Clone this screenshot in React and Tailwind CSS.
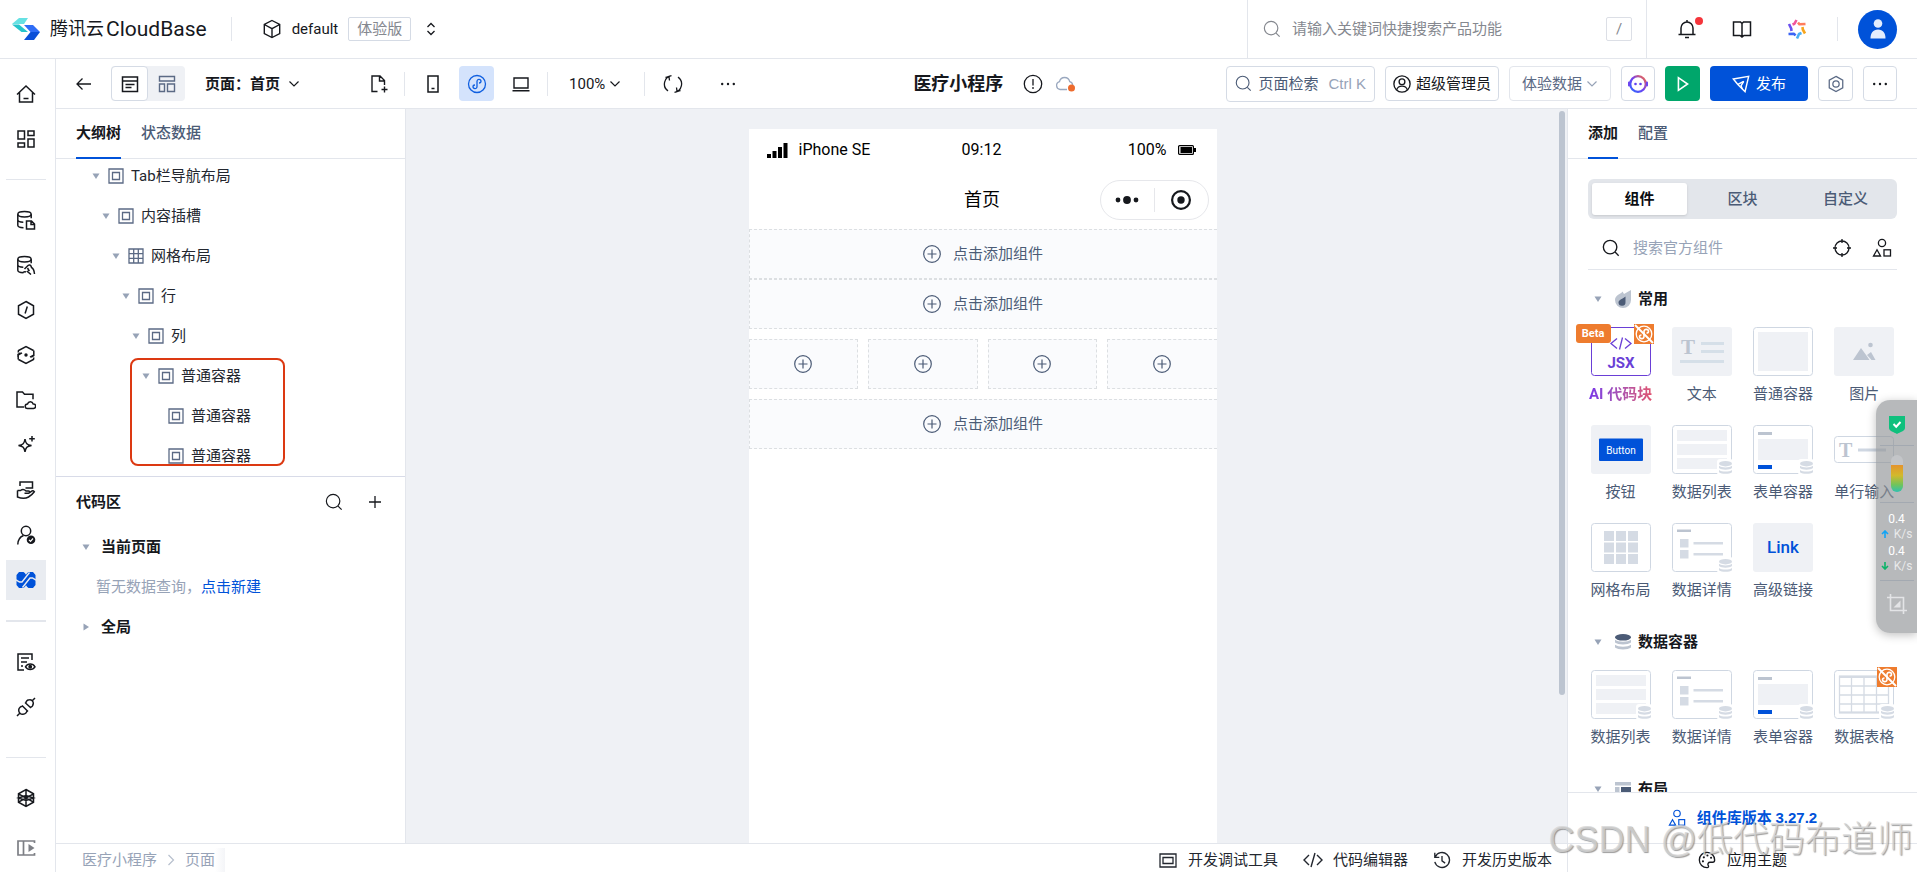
import React from "react";

const INK = "#16181d";

function Icon({ size = 20, box = 20, color = "currentColor", sw = 1.5, children, className = "" }) {
  return (
    <svg
      width={size}
      height={size}
      viewBox={`0 0 ${box} ${box}`}
      fill="none"
      stroke={color}
      strokeWidth={sw}
      className={`shrink-0 ${className}`}
      aria-hidden="true"
    >
      {children}
    </svg>
  );
}

const SearchIcon = ({ size = 18, sw = 1.3, className }) => (
  <Icon size={size} sw={sw} className={className}>
    <circle cx="9" cy="9" r="7.5" />
    <path d="M14.5 14.5 18.5 18.5" />
  </Icon>
);

const Chevron = ({ className }) => (
  <Icon size={12} box={12} sw={1.2} className={className}>
    <path d="m1.5 3.5 4.5 4.5 4.5-4.5" />
  </Icon>
);

const Dots = () => (
  <Icon size={16} box={16}>
    <g fill="currentColor" stroke="none">
      <circle cx="2.2" cy="8" r="1.2" />
      <circle cx="8" cy="8" r="1.2" />
      <circle cx="13.8" cy="8" r="1.2" />
    </g>
  </Icon>
);

const Arrow = ({ open = true }) => (
  <svg width="12" height="12" viewBox="0 0 12 12" className="shrink-0" aria-hidden="true">
    <path d={open ? "M2.5 3.5h7L6 9Z" : "M3.5 2.5v7L9 6Z"} fill="#97a3b7" />
  </svg>
);

const Shapes = ({ size = 20 }) => (
  <Icon size={size} sw={1.3}>
    <circle cx="10" cy="5" r="3.6" />
    <path d="M1.5 18 5 11.8 8.5 18Z" />
    <rect x="12" y="11.8" width="6.5" height="6.2" />
  </Icon>
);

/* ---------- side rail ---------- */

const database = (
  <>
    <ellipse cx="8.5" cy="4.2" rx="6.7" ry="2.7" />
    <path d="M1.8 4.2v11c0 1.5 2.6 2.4 5.7 2.5M1.8 9.8c0 1.3 2.4 2.4 5.5 2.5M15.2 4.2v4" />
  </>
);

const railIcons = {
  home: (
    <>
      <path d="M1 10.5 10 2l9 8.5M3.5 8.5V18h13V8.5M7.5 14.5h5" />
    </>
  ),
  grid: (
    <>
      <path d="M2 2h6.5v8H2zM12 2h6v4.5h-6zM2 14h6.5v4H2zM12 10h6v8h-6z" />
    </>
  ),
  dbFile: (
    <>
      {database}
      <path d="M10.5 11h5l3 3v5h-8zM15 11v3.5h3.5" />
    </>
  ),
  dbLink: (
    <>
      {database}
      <path d="m8.500 14 3.500-3.500c1.200-.9 2.500-.6 3 .6l.5 1.400c2 1 2.700 3 3 6.500M11.500 13l1.500 2.500-1.500 1 3.500 3M7 17.500c1-.8 2-1 3-.5" />
    </>
  ),
  hexSlash: (
    <>
      <path d="m10 1.500 7.500 4.300v8.400L10 18.500l-7.500-4.300V5.800ZM11.300 6.500l-2.200 7" />
    </>
  ),
  hexDot: (
    <>
      <path d="M2.200 7.500 2.500 5.500 10 1.500l7.500 4M2 12V9.500L4.500 7.800M17.800 8v2.500l-2.500 1.700M17.800 12.500l-.3 2L10 18.500l-7.500-4M2 10l4-2.200M18 10l-4 2.200M17.800 5.500V10M2.200 10v4.500" />
      <circle cx="10" cy="10" r="1.700" fill="currentColor" stroke="none" />
    </>
  ),
  folderCloud: (
    <>
      <path d="M8 17H1V2h5.500l2 2.200H17v5" />
      <path d="M11.500 18.500a2.300 2.300 0 0 1 0-4.600 3 3 0 0 1 5.700 0 2.300 2.300 0 0 1 .3 4.600Z" />
    </>
  ),
  sparkle: (
    <>
      <path d="M9 4c.7 4.500 2 5.800 6.500 6.500C11 11.200 9.700 12.500 9 17c-.7-4.500-2-5.800-6.500-6.500C7 9.800 8.300 8.500 9 4ZM16 1v5.500M13.200 3.800h5.600" />
    </>
  ),
  hand: (
    <>
      <path d="M4 6V2h12.500v6h-7" />
      <path d="M1.500 10.500h3c2-1.500 4-1 5.500.5h2.500c1.500 0 1.500 2.200 0 2.300H8.500M1.500 10.500V17c4 1.600 8 1.700 11 0 2-1.200 4.500-3.500 5.800-5.300-1-1.200-2-1.200-3.300 0l-1.800 1.300" />
    </>
  ),
  user: (
    <>
      <circle cx="10" cy="6" r="4.700" />
      <path d="M1.800 19.500c0-4.500 2.200-7.500 5.700-9" />
      <circle cx="15" cy="14.800" r="4.300" fill="currentColor" stroke="none" />
      <path d="m13 14.800 1.500 1.500 2.500-2.800" stroke="#fff" strokeWidth="1.200" />
    </>
  ),
  listEye: (
    <>
      <path d="M8 18H2V2h14v6M5 6h8M5 10h6M5 14h2" />
      <path d="M9.500 14.800c2.200-3.600 7.300-3.600 9.500 0-2.200 3.600-7.300 3.600-9.500 0Z" />
      <circle cx="14.200" cy="14.800" r="1.200" fill="currentColor" />
    </>
  ),
  plug: (
    <>
      <path d="M1 19l2.500-2.500M19 1l-2.500 2.500M6 8.500l6 6M6.800 9.300C5 9 2.800 10.800 2.700 13c-.1 2.500 2 4.500 4.300 4.300 2.300-.1 4-2 4-4M9 5.500l6 5.500M14.200 10.300c1.800-.3 3-2 3.100-4 .1-2-1.800-3.800-3.800-3.600-2 .1-3.500 1.600-3.700 3.500" />
    </>
  ),
  polygon: (
    <>
      <path d="m10 1.500 7.500 4.300v8.400L10 18.500l-7.500-4.300V5.800ZM10 1.500v17M2.500 5.800 17.500 14.200M17.500 5.800 2.500 14.200M2.500 10 10 7.500 17.500 10 10 12.500Z" />
    </>
  ),
};

function RailButton({ name, label }) {
  return (
    <button type="button" aria-label={label} className="flex h-10 w-10 items-center justify-center text-[#16181d]">
      <Icon size={20}>{railIcons[name]}</Icon>
    </button>
  );
}

function Rail() {
  return (
    <nav className="flex w-14 shrink-0 flex-col border-r border-[#e3e6ec] bg-white pt-[15px] pb-1 pl-[6px]">
      <div className="flex flex-col gap-[5px]">
        <RailButton name="home" label="首页" />
        <RailButton name="grid" label="概览" />
      </div>
      <div className="my-5 h-px w-10 bg-[#e3e6ec]" />
      <div className="flex flex-col gap-[5px]">
        <RailButton name="dbFile" label="文档型数据库" />
        <RailButton name="dbLink" label="MySQL 数据库" />
        <RailButton name="hexSlash" label="云函数" />
        <RailButton name="hexDot" label="云托管" />
        <RailButton name="folderCloud" label="云存储" />
        <RailButton name="sparkle" label="AI" />
        <RailButton name="hand" label="工作流" />
        <RailButton name="user" label="身份认证" />
        <button type="button" aria-label="可视化低代码" className="flex h-10 w-10 items-center justify-center bg-[#e9ecf1]">
          <svg width="20" height="20" viewBox="0 0 20 20" aria-hidden="true">
            <path
              d="M3 2h4.500L10 4l2.500-2H17l2.500 3v10L17 18h-4.500L10 16l-2.500 2H3L.5 15V5Z"
              fill="#0052d9"
            />
            <path d="M0 9.800 3.500 12H6l7.500-9.500M20 10.200 16.500 8H14l-7.500 9.500" stroke="#e9ecf1" strokeWidth="1.400" fill="none" />
            <path d="M8.500 1.500h3L10 5ZM8.500 18.500h3L10 15Z" fill="#e9ecf1" />
          </svg>
        </button>
      </div>
      <div className="my-5 h-[2px] w-10 bg-[#e3e6ec]" />
      <div className="flex flex-col gap-[5px]">
        <RailButton name="listEye" label="日志" />
        <RailButton name="plug" label="扩展" />
      </div>
      <div className="mt-auto mb-5 h-px w-10 shrink-0 bg-[#e3e6ec]" />
      <div className="flex flex-col gap-[10px]">
        <RailButton name="polygon" label="环境" />
        <button type="button" aria-label="展开" className="flex h-10 w-10 items-center justify-center text-[#7d7f85]">
          <Icon size={20} sw={1.7}>
            <path d="M18.500 5V3H2v14h16.500v-2M7.500 3v14" />
            <path d="M12.500 6 18.500 10l-6 4Z" fill="currentColor" stroke="none" />
          </Icon>
        </button>
      </div>
    </nav>
  );
}

/* ---------- header ---------- */

function Header() {
  return (
    <header className="flex h-[59px] shrink-0 items-center border-b border-[#e3e6ec] bg-white">
      <a href="#home" className="flex items-center pl-3">
        <svg width="28" height="22" viewBox="0 0 28 22" aria-hidden="true">
          <path d="M7 0h9l-4 6H0Z" fill="#66e1e3" />
          <path d="M0 6.500h7L16 14H9.500Z" fill="#25c4cb" />
          <path d="M12 7h9l7 7h-9.500Z" fill="#2f6df6" />
          <path d="M28 14h-9.500L12 22h10Z" fill="#0a4fd8" />
        </svg>
        <span className="ml-[10px] text-[18px] leading-7">腾讯云</span>
        <span className="ml-[2px] font-[Roboto] text-[21px] leading-7">CloudBase</span>
      </a>
      <div className="mx-6 h-6 w-px bg-[#e3e6ec]" />
      <button type="button" className="ml-[6px] flex items-center">
        <Icon size={20} sw={1.4} color={INK}>
          <path d="m10 1.500 7.700 4v9L10 18.500l-7.700-4v-9ZM2.300 5.500 10 9.700l7.700-4.200M10 9.700v8.800" />
        </Icon>
        <span className="ml-[10px] leading-6">default</span>
        <span className="ml-[10px] flex h-6 items-center rounded-[2px] border border-[#d5dbe5] px-2 text-[#85888f]">体验版</span>
        <Icon size={16} box={16} sw={1.300} className="ml-3">
          <path d="m4.500 6 3.500-3.500L11.500 6M4.500 10l3.500 3.500 3.500-3.500" />
        </Icon>
      </button>
      <label className="ml-auto flex h-full w-[400px] items-center border-x border-[#e3e6ec] pr-[14px] pl-[15px] text-[#85888f]">
        <SearchIcon />
        <input
          type="text"
          aria-label="搜索产品功能"
          placeholder="请输入关键词快捷搜索产品功能"
          className="ml-[11px] min-w-0 flex-1 bg-transparent outline-none placeholder:text-[#85888f]"
        />
        <kbd className="flex h-6 w-[26px] items-center justify-center rounded-[2px] border border-[#dcdfe6] font-[Roboto] text-[15px]">/</kbd>
      </label>
      <div className="flex items-center pr-5 pl-7">
        <div className="flex gap-[31px]">
          <button type="button" aria-label="消息" className="relative flex h-6 w-6 items-center justify-center">
            <Icon size={20} sw={1.500} color={INK}>
              <path d="M4 15.500V9a6 6 0 0 1 12 0v6.500M1.500 15.500h17M8 18.500h4M10 3V1" />
            </Icon>
            <span className="absolute top-0 right-[-4px] h-2 w-2 rounded-full bg-[#f5353b]" />
          </button>
          <button type="button" aria-label="文档" className="flex h-6 w-6 items-center justify-center">
            <Icon size={20} sw={1.500} color={INK}>
              <path d="M10 4.500 8.500 3H1.500v13.500H8l2 1.500 2-1.500h6.500V3h-7ZM10 4.500V18" />
            </Icon>
          </button>
          <button type="button" aria-label="AI 助手" className="flex h-6 w-6 items-center justify-center">
            <svg width="20" height="20" viewBox="0 0 20 20" fill="none" strokeWidth="2.600" strokeLinejoin="round" aria-hidden="true">
              <path d="M5.500 5.500 7.500 4.700 9.500 1" stroke="#f0569c" />
              <path d="M11 3.500 12.500 5.300 18.500 5" stroke="#ff7d5d" />
              <path d="m15.500 8 .3 2.500 2.200 4" stroke="#f7a51c" />
              <path d="m14.500 14-2.500 1-2 4.500" stroke="#4aaff5" />
              <path d="m8.500 16.500-1.500-1.700-5.500.2" stroke="#3b64f4" />
              <path d="M4.500 12 4.200 9.500 2 5" stroke="#6a50f0" />
            </svg>
          </button>
        </div>
        <div className="ml-7 h-6 w-px bg-[#e3e6ec]" />
        <button type="button" aria-label="账号" className="ml-5 flex h-[39px] w-[39px] items-center justify-center rounded-full bg-[#0052d9]">
          <svg width="18" height="20" viewBox="0 0 18 20" fill="#e4edfd" aria-hidden="true">
            <circle cx="9" cy="4.500" r="4.300" />
            <path d="M1.500 19.500C1.500 14 4 10.500 9 10.500s7.500 3.500 7.500 9Z" />
          </svg>
        </button>
      </div>
    </header>
  );
}

/* ---------- toolbar ---------- */

function Toolbar() {
  return (
    <div className="flex h-[50px] shrink-0 items-center border-b border-[#e3e6ec] bg-white pr-5 pl-5">
      <div className="flex items-center">
        <button type="button" aria-label="返回">
          <Icon size={16} box={16} sw={1.300}>
            <path d="M15 8H1M6.500 2.500 1 8l5.500 5.500" />
          </Icon>
        </button>
        <div className="ml-[19px] flex h-[35px] rounded-[4px] bg-[#eff1f5]">
          <button type="button" aria-label="大纲视图" className="flex w-[37px] items-center justify-center rounded-[4px] border border-[#d5dbe5] bg-white">
            <Icon size={18} box={18} sw={1.500}>
              <path d="M1.500 2h15v14.500h-15zM1.500 6h15M4.500 9.500h9M4.500 12.500h6" />
            </Icon>
          </button>
          <button type="button" aria-label="布局视图" className="flex w-[37px] items-center justify-center text-[#5b6a85]">
            <Icon size={18} box={18} sw={1.400}>
              <path d="M1.500 1.500h15v4.500h-15zM1.500 9h5v7.500h-5zM9.500 9h7v7.500h-7z" />
            </Icon>
          </button>
        </div>
        <button type="button" className="ml-5 flex items-center font-bold">
          页面：首页
          <Chevron className="ml-2" />
        </button>
        <button type="button" aria-label="新建页面" className="ml-[69px]">
          <Icon size={20} sw={1.400}>
            <path d="M8.500 17.500H3V2h8l4.500 4.500V11M10.500 2v5h5M15.500 12.500v6M12.500 15.500h6" />
          </Icon>
        </button>
      </div>
      <div className="mr-[13px] ml-[15px] h-6 w-px bg-[#e3e6ec]" />
      <div className="flex items-center gap-[11px]">
        <button type="button" aria-label="手机" className="flex h-[35px] w-[30px] items-center justify-center">
          <Icon size={18} box={18} sw={1.500}>
            <path d="M4 1h10v16H4zM7.500 13.500h3" />
          </Icon>
        </button>
        <button type="button" aria-label="小程序" className="flex h-[35px] w-[35px] items-center justify-center rounded-[4px] bg-[#d4e3fc] text-[#0f5fe0]">
          <Icon size={20} sw={1.300}>
            <circle cx="10" cy="10" r="8.500" />
            <path d="M10 12.500c0 3-4 2.500-4 .3C6 11.500 7 11 8 11M10 12.500V7.500c0-3 4-2.500 4-.3C14 8.500 13 9 12 9" />
          </Icon>
        </button>
        <button type="button" aria-label="电脑" className="flex h-[35px] w-8 items-center justify-center">
          <Icon size={18} box={18} sw={1.400}>
            <path d="M2 3h14v10H2zM.5 15.800h17" />
          </Icon>
        </button>
      </div>
      <div className="mr-[21px] ml-[10px] h-6 w-px bg-[#e3e6ec]" />
      <button type="button" className="flex items-center">
        100%
        <Chevron className="ml-1" />
      </button>
      <div className="mr-[18px] ml-[23px] h-6 w-px bg-[#e3e6ec]" />
      <button type="button" aria-label="刷新" className="mr-[37px]">
        <Icon size={20} sw={1.300}>
          <path d="M8.500 1.600A8.500 8.500 0 0 0 5 16.900M11.500 18.400A8.500 8.500 0 0 0 15 3.100" />
          <path d="M2.500 3.500 6 2.800l.5 3.700M17.500 16.500l-3.500.7-.5-3.700" />
        </Icon>
      </button>
      <button type="button" aria-label="更多">
        <Dots />
      </button>
      <div className="mx-auto flex items-center pl-7">
        <h1 className="text-[18px] font-bold leading-7">医疗小程序</h1>
        <Icon size={20} sw={1.300} className="ml-5">
          <circle cx="10" cy="10" r="8.700" />
          <path d="M10 5v6.500M10 13v2" />
        </Icon>
        <svg width="22" height="18" viewBox="0 0 22 18" className="ml-3" fill="none" aria-hidden="true">
          <path d="M5 14.500a4 4 0 0 1-.5-7.800 5.200 5.200 0 0 1 10.200 0 4 4 0 0 1 3 3.300M5 14.500h7" stroke="#9aa8bf" strokeWidth="1.300" />
          <circle cx="16.500" cy="13" r="3.500" fill="#ed6b2d" />
        </svg>
      </div>
      <div className="flex items-center gap-[10px]">
        <button type="button" className="flex h-9 items-center rounded-[4px] border border-[#d5dbe5] px-2 text-[#4b5b76]">
          <SearchIcon size={17} />
          <span className="ml-[6px]">页面检索</span>
          <span className="ml-[10px] font-['Liberation_Sans'] text-[#97a3b7]">Ctrl K</span>
        </button>
        <button type="button" className="flex h-[35px] items-center rounded-[4px] border border-[#d5dbe5] px-[7px]">
          <Icon size={18} sw={1.500}>
            <circle cx="10" cy="10" r="9" />
            <circle cx="10" cy="7.500" r="3.200" />
            <path d="M4 16.500c1-3 3-4.200 6-4.200s5 1.200 6 4.200" />
          </Icon>
          <span className="ml-[5px]">超级管理员</span>
        </button>
        <button type="button" className="flex h-[35px] items-center rounded-[4px] border border-[#e3e6ec] px-3 text-[#5b6a85]">
          体验数据
          <Chevron className="ml-1 text-[#97a3b7]" />
        </button>
        <button type="button" aria-label="AI 助手" className="flex h-[35px] w-[34px] items-center justify-center rounded-[4px] border border-[#d5dbe5]">
          <svg width="20" height="20" viewBox="0 0 20 20" aria-hidden="true">
            <defs>
              <linearGradient id="bot" x1="0" y1="1" x2="1" y2="0">
                <stop offset="0" stopColor="#2b6bff" />
                <stop offset="0.500" stopColor="#7040f0" />
                <stop offset="1" stopColor="#ff6a3d" />
              </linearGradient>
            </defs>
            <circle cx="10" cy="10" r="7.800" fill="#fff" stroke="url(#bot)" strokeWidth="2.300" />
            <path d="M1 8.500v3M19 8.500v3" stroke="#6b45f0" strokeWidth="2" strokeLinecap="round" />
            <circle cx="7.500" cy="10" r="1.300" fill="#6040f0" />
            <circle cx="12.500" cy="10" r="1.300" fill="#6040f0" />
          </svg>
        </button>
        <button type="button" aria-label="预览" className="flex h-[35px] w-[35px] items-center justify-center rounded-[4px] bg-[#00a66b] text-white">
          <Icon size={16} box={14} sw={1.400}>
            <path d="M3 1.500v11L11 7Z" />
          </Icon>
        </button>
        <button type="button" className="flex h-[35px] w-[98px] items-center justify-center rounded-[4px] bg-[#0052d9] text-white">
          <Icon size={18} sw={1.600}>
            <path d="M1.500 4.500 18.500 1.500 14.500 18.500 6.500 10.500ZM6.500 10.500 13 7M6.500 10.500v0" />
            <path d="M11.500 15.500 10 12l3-5" />
          </Icon>
          <span className="ml-[6px]">发布</span>
        </button>
        <button type="button" aria-label="设置" className="flex h-[35px] w-[35px] items-center justify-center rounded-[4px] border border-[#d5dbe5] text-[#5b6a85]">
          <Icon size={18} sw={1.400}>
            <path d="m10 1.500 7.500 4.200v8.600L10 18.500l-7.500-4.200V5.700Z" />
            <circle cx="10" cy="10" r="3.500" />
          </Icon>
        </button>
        <button type="button" aria-label="更多操作" className="flex h-[35px] w-[34px] items-center justify-center rounded-[4px] border border-[#d5dbe5]">
          <Dots />
        </button>
      </div>
    </div>
  );
}

/* ---------- left panel ---------- */

const tree = [
  { text: "Tab栏导航布局", indent: "pl-[34px]", open: true },
  { text: "内容插槽", indent: "pl-[44px]", open: true },
  { text: "网格布局", indent: "pl-[54px]", open: true, grid: true },
  { text: "行", indent: "pl-[64px]", open: true },
  { text: "列", indent: "pl-[74px]", open: true },
  { text: "普通容器", indent: "pl-[84px]", open: true },
  { text: "普通容器", indent: "pl-[94px]" },
  { text: "普通容器", indent: "pl-[94px]" },
];

function LeftPanel() {
  return (
    <aside className="flex w-[350px] shrink-0 flex-col border-r border-[#e3e6ec] bg-white">
      <div className="flex h-[50px] shrink-0 gap-5 border-b border-[#e3e6ec] pl-5">
        <button type="button" className="-mb-px border-b-2 border-[#0052d9] font-bold">大纲树</button>
        <button type="button" className="-mb-px border-b-2 border-transparent font-medium text-[#4b5b76]">状态数据</button>
      </div>
      <div className="relative h-[317px] shrink-0 overflow-hidden">
        <ul className="-mt-[3px]">
          {tree.map((n, i) => (
            <li key={i} className={`flex h-10 items-center ${n.indent}`}>
              {n.open ? <Arrow /> : <span className="w-3" />}
              <Icon size={16} box={16} sw={1.300} color="#5b6a85" className="mr-[7px] ml-[6px]">
                {n.grid ? (
                  <path d="M1 1h14v14H1zM5.700 1v14M10.300 1v14M1 5.700h14M1 10.300h14" />
                ) : (
                  <path d="M1 1h14v14H1zM4.500 4.500h7v7h-7z" />
                )}
              </Icon>
              <span className="text-[#23272f]">{n.text}</span>
            </li>
          ))}
        </ul>
        <div className="absolute top-[199px] left-[74px] h-[108px] w-[155px] rounded-[8px] border-2 border-[#dc3912]" />
      </div>
      <section className="flex-1 border-t border-[#d8dbe8]">
        <div className="flex h-[50px] items-center pr-[22px] pl-5">
          <h2 className="font-bold">代码区</h2>
          <button type="button" aria-label="搜索代码" className="ml-auto"><SearchIcon /></button>
          <button type="button" aria-label="新建" className="ml-6">
            <Icon size={16} box={16} sw={1.300}>
              <path d="M8 2v12M2 8h12" />
            </Icon>
          </button>
        </div>
        <div className="flex h-10 items-center pl-6 font-bold">
          <Arrow />
          <span className="ml-[9px]">当前页面</span>
        </div>
        <p className="flex h-10 items-center pl-10 text-[#97a3b7]">
          暂无数据查询，
          <a href="#new" className="text-[#0052d9]">点击新建</a>
        </p>
        <div className="flex h-10 items-center pl-6 font-bold">
          <Arrow open={false} />
          <span className="ml-[9px]">全局</span>
        </div>
      </section>
    </aside>
  );
}

/* ---------- canvas ---------- */

const PlusCircle = () => (
  <Icon size={18} box={18} sw={1.200}>
    <circle cx="9" cy="9" r="8.300" />
    <path d="M9 4.500v9M4.500 9h9" />
  </Icon>
);

const slot = "flex h-[50px] items-center justify-center gap-3 border border-dashed border-[#dcdfe2] bg-[#fafbfd] text-[#4b5b76]";

function AddRow() {
  return (
    <button type="button" className={`${slot} w-full border-r-0`}>
      <PlusCircle />
      点击添加组件
    </button>
  );
}

function Canvas() {
  return (
    <main className="relative flex min-w-0 flex-1 justify-center overflow-hidden bg-[#eff1f5] pt-5 pr-2">
      <div className="flex w-[468px] flex-col bg-white text-black">
        <div className="grid h-[42px] grid-cols-3 items-center pr-5 pl-[18px] font-[Roboto] text-[16px]">
          <div className="flex items-center gap-[11px]">
            <svg width="21" height="16" viewBox="0 0 21 16" aria-hidden="true">
              <path d="M0 12h4v4H0zM5.500 9h4v7h-4zM11 5h4v11h-4zM16.500 1h4v15h-4z" />
            </svg>
            iPhone SE
          </div>
          <div className="text-center">09:12</div>
          <div className="flex items-center justify-end gap-3">
            100%
            <svg width="18" height="12" viewBox="0 0 18 12" aria-hidden="true">
              <rect x="0.600" y="1.600" width="14.800" height="8.800" rx="1" fill="none" stroke="#000" strokeWidth="1.200" />
              <rect x="2.500" y="3" width="11.500" height="6" />
              <rect x="16" y="4" width="2" height="4" />
            </svg>
          </div>
        </div>
        <div className="flex h-[58px] items-center pr-2">
          <span className="w-[108px]" />
          <h2 className="flex-1 pl-2 text-center text-[18px]">首页</h2>
          <div className="flex h-10 w-[109px] items-center rounded-full border border-[#e6e7eb]">
            <button type="button" aria-label="菜单" className="flex flex-1 justify-center">
              <svg width="24" height="10" viewBox="0 0 24 10" fill="#16181d" aria-hidden="true">
                <circle cx="3" cy="5" r="2.400" />
                <circle cx="12" cy="5" r="3.900" />
                <circle cx="21" cy="5" r="2.400" />
              </svg>
            </button>
            <div className="h-6 w-px bg-[#e6e7eb]" />
            <button type="button" aria-label="关闭" className="flex flex-1 justify-center">
              <svg width="20" height="20" viewBox="0 0 20 20" aria-hidden="true">
                <circle cx="10" cy="10" r="8.900" fill="none" stroke="#16181d" strokeWidth="2.200" />
                <circle cx="10" cy="10" r="3.700" fill="#16181d" />
              </svg>
            </button>
          </div>
        </div>
        <AddRow />
        <AddRow />
        <div className="my-[10px] grid grid-cols-4 gap-[10px]">
          {["左上", "左中", "右中"].map((n) => (
            <button key={n} type="button" aria-label={`${n}添加组件`} className={slot}>
              <PlusCircle />
            </button>
          ))}
          <button type="button" aria-label="最右添加组件" className={`${slot} border-r-0`}>
            <PlusCircle />
          </button>
        </div>
        <AddRow />
      </div>
      <div className="absolute top-[2px] right-[2px] h-[584px] w-[6px] rounded-full bg-[#bcc4d0]" />
    </main>
  );
}

/* ---------- component thumbnails ---------- */

function Thumb({ children, filled, plain }) {
  return (
    <svg width="60" height="49" viewBox="0 0 60 49" className="block" aria-hidden="true">
      {!plain && (
        <rect
          x={filled ? 0 : 0.5}
          y={filled ? 0 : 0.5}
          width={filled ? 60 : 59}
          height={filled ? 49 : 48}
          rx="3"
          fill={filled ? "#eff1f5" : "#fff"}
          stroke={filled ? "none" : "#cfd7e2"}
        />
      )}
      {children}
    </svg>
  );
}

const DbMark = () => (
  <g>
    <rect x="45" y="34" width="16" height="16" rx="3" fill="#fff" />
    <g fill="#d5dbe4">
      <ellipse cx="53.500" cy="38.700" rx="6.500" ry="2.700" />
      <path d="M47 40.800c2.500 2.200 10.500 2.200 13 0v2.300c-2.500 2.200-10.500 2.200-13 0ZM47 44.900c2.500 2.200 10.500 2.200 13 0v2.300c-2.500 2.200-10.500 2.200-13 0Z" />
    </g>
  </g>
);

const ListThumb = () => (
  <Thumb>
    <path d="M5 5h50v11H5zM5 19h50v11H5zM5 33h50v11H5z" fill="#eff1f5" />
    <DbMark />
  </Thumb>
);
const FormThumb = () => (
  <Thumb>
    <path d="M5 14h50v21H5z" fill="#eff1f5" />
    <path d="M5 7h14v3H5z" fill="#bcc4d0" />
    <path d="M5 40h14v4H5z" fill="#0052d9" />
    <DbMark />
  </Thumb>
);
const DetailThumb = () => (
  <Thumb>
    <path d="M5 6.500h14v2.500H5z" fill="#bcc4d0" />
    <path d="M8 16h8.500v8.500H8zM8 27h8.500v8.500H8zM21.500 19H51v2.500H21.500zM21.500 30H51v2.500H21.500z" fill="#d5dbe4" />
    <DbMark />
  </Thumb>
);
const TextThumb = () => (
  <Thumb filled>
    <text x="9" y="27" fontFamily="'Liberation Serif', serif" fontWeight="bold" fontSize="21" fill="#bcc4d0">T</text>
    <path d="M29 15h23v3H29zM29 23h23v3H29zM8 33h44v3H8z" fill="#d5dfe8" />
  </Thumb>
);
const BoxThumb = () => (
  <Thumb>
    <path d="M5 5h50v39H5z" fill="#eff1f5" />
  </Thumb>
);
const ImageThumb = () => (
  <Thumb filled>
    <path d="M19 33 27 21l6.500 9 2 3ZM33 28l4-3 4.500 8h-4Z" fill="#bcc4d0" />
    <circle cx="36.500" cy="18" r="2.300" fill="#bcc4d0" />
  </Thumb>
);
const ButtonThumb = () => (
  <Thumb filled>
    <rect x="8" y="13.500" width="44" height="22.500" rx="1" fill="#0052d9" />
    <text x="30" y="28.500" textAnchor="middle" fontFamily="Roboto, sans-serif" fontSize="10" fill="#fff">Button</text>
  </Thumb>
);
const InputThumb = () => (
  <Thumb plain>
    <rect x="0.500" y="11.500" width="59" height="26" rx="3" fill="#fff" stroke="#cfd7e2" />
    <text x="5" y="31.500" fontFamily="'Liberation Serif', serif" fontWeight="bold" fontSize="20" fill="#bcc4d0">T</text>
    <path d="M24 23.500h28v3H24z" fill="#cfd7e2" />
  </Thumb>
);
const GridThumb = () => (
  <Thumb>
    <path
      d="M13 8h10v10H13zM25 8h10v10H25zM37 8h10v10H37zM13 19.500h10v10H13zM25 19.500h10v10H25zM37 19.500h10v10H37zM13 31h10v10H13zM25 31h10v10H25zM37 31h10v10H37z"
      fill="#d5dbe4"
    />
  </Thumb>
);
const LinkThumb = () => (
  <Thumb filled>
    <text x="30" y="30" textAnchor="middle" fontFamily="Roboto, sans-serif" fontWeight="500" fontSize="17" fill="#0052d9">Link</text>
  </Thumb>
);
const TableThumb = () => (
  <Thumb>
    <path d="M5.500 6.500h49v36h-49zM5.500 16h49M5.500 25h49M5.500 34h49M17.500 6.500v36M30 6.500v36M42.500 6.500v36" fill="none" stroke="#d5dbe4" strokeWidth="1.300" />
    <path d="M5 5.500h50v2.500H5zM5 41.500h50v2H5z" fill="#d5dbe4" />
    <DbMark />
  </Thumb>
);
const JsxThumb = () => (
  <svg width="60" height="49" viewBox="0 0 60 49" className="block" aria-hidden="true">
    <rect x="0.500" y="0.500" width="59" height="48" rx="3" fill="#fff" stroke="#6a3fd6" />
    <path d="m26 11.500-6 5 6 5M34 11.500l6 5-6 5M31.500 10.500 28.500 22.500" fill="none" stroke="#6a3fd6" strokeWidth="1.300" />
    <text x="30" y="41" textAnchor="middle" fontFamily="Roboto, sans-serif" fontWeight="700" fontSize="15" fill="#6a3fd6">JSX</text>
  </svg>
);

const NoMiniProgram = () => (
  <svg width="20" height="20" viewBox="0 0 20 20" className="absolute -top-[3px] -right-[3px]" aria-hidden="true">
    <rect width="20" height="20" fill="#ee7c2e" />
    <circle cx="10" cy="10" r="7.800" fill="none" stroke="#fff" strokeWidth="1.300" />
    <path d="M10 12.500c0 3-4.500 2.500-4.500.3C5.500 11.500 6.500 11 7.500 11M10 12.500V7.500c0-3 4.500-2.500 4.500-.3C14.500 8.500 13.500 9 12.500 9" fill="none" stroke="#fff" strokeWidth="1.600" />
    <path d="m1 1 18 18" stroke="#fff" strokeWidth="2" />
  </svg>
);

function Card({ label, Art, noMini, beta }) {
  return (
    <button type="button" className="flex flex-col items-center gap-[6px]">
      <span className="relative block">
        <Art />
        {noMini && <NoMiniProgram />}
        {beta && (
          <span className="absolute -top-[3px] -left-[15px] flex h-[19px] w-[35px] items-center justify-center rounded-[3px] bg-[#ee7c2e] font-[Roboto] text-[11px] font-bold leading-none text-white">
            Beta
          </span>
        )}
      </span>
      <span
        className={
          beta
            ? "bg-linear-to-r from-[#7a35e8] to-[#e0526f] bg-clip-text font-bold leading-6 whitespace-nowrap text-transparent"
            : "leading-6 whitespace-nowrap text-[#4b5b76]"
        }
      >
        {label}
      </span>
    </button>
  );
}

function Section({ title, icon, children }) {
  return (
    <section className="mb-5">
      <h3 className="flex h-10 items-center pl-6 font-bold">
        <Arrow />
        <span className="mr-[7px] ml-[11px]">{icon}</span>
        {title}
      </h3>
      <div className="mt-2 grid grid-cols-4 gap-y-[19px] px-3">{children}</div>
    </section>
  );
}

function RightPanel() {
  return (
    <aside className="flex w-[350px] shrink-0 flex-col border-l border-[#e3e6ec] bg-white">
      <div className="flex h-[50px] shrink-0 gap-5 border-b border-[#e3e6ec] pl-5">
        <button type="button" className="-mb-px border-b-2 border-[#0052d9] font-bold">添加</button>
        <button type="button" className="-mb-px border-b-2 border-transparent font-medium text-[#4b5b76]">配置</button>
      </div>
      <div className="mx-5 mt-5 flex h-10 shrink-0 rounded-[6px] bg-[#e3e6eb] p-1 font-medium text-[#4b5b76]">
        <button type="button" className="flex-1 rounded-[3px] bg-white font-bold text-[#0b0d12] shadow-sm">组件</button>
        <button type="button" className="ml-2 flex-1">区块</button>
        <button type="button" className="ml-2 flex-1">自定义</button>
      </div>
      <div className="mx-5 flex h-[51px] shrink-0 items-center border-b border-[#e3e6ec] pt-2 pr-[5px] pl-[14px]">
        <SearchIcon sw={1.500} />
        <input
          type="text"
          aria-label="搜索官方组件"
          placeholder="搜索官方组件"
          className="ml-[13px] min-w-0 flex-1 bg-transparent outline-none placeholder:text-[#97a3b7]"
        />
        <button type="button" aria-label="定位">
          <Icon size={20} sw={1.300}>
            <circle cx="10" cy="10" r="7" />
            <path d="M10 1v4M10 15v4M1 10h4M15 10h4" />
          </Icon>
        </button>
        <button type="button" aria-label="组件库" className="ml-5"><Shapes /></button>
      </div>
      <div className="min-h-0 flex-1 overflow-hidden pt-[9px]">
        <Section
          title="常用"
          icon={
            <svg width="16" height="18" viewBox="0 0 16 18" aria-hidden="true">
              <path d="M16 0v10a8 8 0 1 1-16 0C0 5 6 4 7.500 1.500L9 4Z" fill="#bcc4d0" />
              <path d="M10.500 6.500V12a3.500 3.500 0 1 1-7 .5C3.500 9.500 8 9 10.500 6.500Z" fill="#4b5b76" />
            </svg>
          }
        >
          <Card label="AI 代码块" Art={JsxThumb} noMini beta />
          <Card label="文本" Art={TextThumb} />
          <Card label="普通容器" Art={BoxThumb} />
          <Card label="图片" Art={ImageThumb} />
          <Card label="按钮" Art={ButtonThumb} />
          <Card label="数据列表" Art={ListThumb} />
          <Card label="表单容器" Art={FormThumb} />
          <Card label="单行输入" Art={InputThumb} />
          <Card label="网格布局" Art={GridThumb} />
          <Card label="数据详情" Art={DetailThumb} />
          <Card label="高级链接" Art={LinkThumb} />
        </Section>
        <Section
          title="数据容器"
          icon={
            <svg width="16" height="16" viewBox="0 0 16 16" aria-hidden="true">
              <ellipse cx="8" cy="3.300" rx="8" ry="3.300" fill="#4b5b76" />
              <path d="M0 5.800c3 2.600 13 2.600 16 0v2.800c-3 2.600-13 2.600-16 0ZM0 10.800c3 2.600 13 2.600 16 0v2.800c-3 2.600-13 2.600-16 0Z" fill="#bcc4d0" />
            </svg>
          }
        >
          <Card label="数据列表" Art={ListThumb} />
          <Card label="数据详情" Art={DetailThumb} />
          <Card label="表单容器" Art={FormThumb} />
          <Card label="数据表格" Art={TableThumb} noMini />
        </Section>
        <Section
          title="布局"
          icon={
            <svg width="16" height="16" viewBox="0 0 16 16" aria-hidden="true">
              <path d="M0 1h16v3.500H0zM0 6h4.500v9H0z" fill="#bcc4d0" />
              <path d="M6 6h10v9H6z" fill="#4b5b76" />
            </svg>
          }
        />
      </div>
      <div className="flex h-[51px] shrink-0 items-center justify-center gap-[11px] border-t border-[#e3e6ec] text-[#0052d9]">
        <Shapes size={18} />
        <a href="#version" className="font-bold">组件库版本 <span className="font-['Liberation_Sans']">3.27.2</span></a>
      </div>
    </aside>
  );
}

/* ---------- bottom bar ---------- */

function BottomBar() {
  return (
    <footer className="flex h-[29px] shrink-0 items-center border-t border-[#e3e6ec] bg-white">
      <nav className="flex items-center pt-[3px] pl-[26px] text-[#97a3b7]">
        <a href="#app">医疗小程序</a>
        <Icon size={12} box={12} sw={1.200} className="mx-2 text-[#b6bfcd]">
          <path d="m3.500 1 5 5-5 5" />
        </Icon>
        <a href="#page" className="bg-linear-to-r from-white from-75% to-[#f4f5f8] pr-[10px] leading-6">页面</a>
      </nav>
      <div className="ml-auto flex items-center gap-[25px] pt-[3px] pr-[15px] text-[#23272f]">
        <button type="button" className="flex items-center gap-[11px]">
          <Icon size={18} box={18} sw={1.300}>
            <path d="M1 3h16v13H1zM4 6.500h10v6H4z" />
          </Icon>
          开发调试工具
        </button>
        <button type="button" className="flex items-center gap-[10px]">
          <Icon size={20} sw={1.400}>
            <path d="M6 5 1 10l5 5M14 5l5 5-5 5M12 3 8 17" />
          </Icon>
          代码编辑器
        </button>
        <button type="button" className="flex items-center gap-[11px]">
          <Icon size={18} sw={1.500}>
            <path d="M2.500 6.500A8.300 8.300 0 1 1 2 12M2 2v5h5M10 5.500V11l3.500 2.500" />
          </Icon>
          开发历史版本
        </button>
      </div>
      <div className="flex h-full w-[350px] shrink-0 items-center justify-center border-l border-[#e3e6ec] pt-[3px]">
        <button type="button" className="flex items-center gap-[11px]">
          <Icon size={18} sw={1.500}>
            <path d="M10 1.500a8.500 8.500 0 1 0 0 17c2 0 2-1.500 1.300-2.600-.8-1.300 0-3.400 2-3.400h3c1.500 0 2.200-1 2.200-2.500 0-5-4-8.500-8.500-8.500Z" />
            <g fill="currentColor" stroke="none">
              <circle cx="5.500" cy="11.500" r="1.200" />
              <circle cx="6.500" cy="7" r="1.200" />
              <circle cx="10.500" cy="5" r="1.200" />
              <circle cx="14.500" cy="7.500" r="1.200" />
            </g>
          </Icon>
          应用主题
        </button>
      </div>
    </footer>
  );
}

/* ---------- floating desktop monitor ---------- */

function SpeedWidget() {
  return (
    <div className="absolute top-[400px] right-0 flex h-[233px] w-[41px] flex-col items-center rounded-l-[14px] bg-[#919397]/65 pt-4 font-[Roboto] text-white shadow-[0_2px_10px_rgba(0,0,0,0.25)]">
      <svg width="16" height="18" viewBox="0 0 16 18" aria-hidden="true">
        <path d="M0 0h16v12c0 3-5 4-8 6-3-2-8-3-8-6Z" fill="#0fc07d" />
        <path d="m4.500 8 2.700 2.700L11.500 6" fill="none" stroke="#fff" strokeWidth="2" />
      </svg>
      <div className="mt-[11px] h-px w-[34px] bg-[#a3a9b1]" />
      <div className="mt-[9px] h-[37px] w-3 shrink-0 rounded-full bg-[linear-gradient(to_bottom,#c3c5c8_0_26%,#e5922d_26%,#d3b92c_55%,#72c45a_80%,#2fc1b0)]" />
      <div className="mt-[10px] h-px w-[34px] bg-[#a3a9b1]" />
      <div className="mt-[9px] text-[12px] leading-[14px]">0.4</div>
      <div className="flex items-center gap-[5px] text-[12px] leading-4 text-white/70">
        <Icon size={8} box={8} sw={1.600} color="#12a4f5"><path d="M4 8V1M1 4l3-3 3 3" /></Icon>
        K/s
      </div>
      <div className="mt-[2px] text-[12px] leading-[14px]">0.4</div>
      <div className="flex items-center gap-[5px] text-[12px] leading-4 text-white/70">
        <Icon size={8} box={8} sw={1.600} color="#0bb368"><path d="M4 0v7M1 4l3 3 3-3" /></Icon>
        K/s
      </div>
      <div className="mt-[6px] h-px w-[34px] bg-[#a3a9b1]" />
      <Icon size={20} sw={1.600} color="#e3e4e6" className="mt-[13px]">
        <path d="M3.500 0v16.500H20M0 3.500h16.500V20" />
        <path d="M13.500 6.500v7h-7Z" fill="#e3e4e6" stroke="none" />
      </Icon>
    </div>
  );
}

export default function App() {
  return (
    <div className="relative flex h-screen flex-col overflow-hidden bg-white font-[Roboto,'Noto_Sans_CJK_SC',sans-serif] text-[15px] leading-5 text-[#16181d]">
      <Header />
      <div className="flex min-h-0 flex-1">
        <Rail />
        <div className="flex min-w-0 flex-1 flex-col">
          <Toolbar />
          <div className="flex min-h-0 flex-1">
            <LeftPanel />
            <Canvas />
            <RightPanel />
          </div>
          <BottomBar />
        </div>
      </div>
      <SpeedWidget />
      <div className="pointer-events-none absolute right-[4px] bottom-3 font-['Liberation_Sans','Noto_Sans_CJK_SC',sans-serif] text-[36px] leading-10 font-light whitespace-nowrap text-[#d6d6d6]/80 [text-shadow:1px_1px_1px_rgba(90,90,90,0.6)]">
        CSDN @低代码布道师
      </div>
    </div>
  );
}
